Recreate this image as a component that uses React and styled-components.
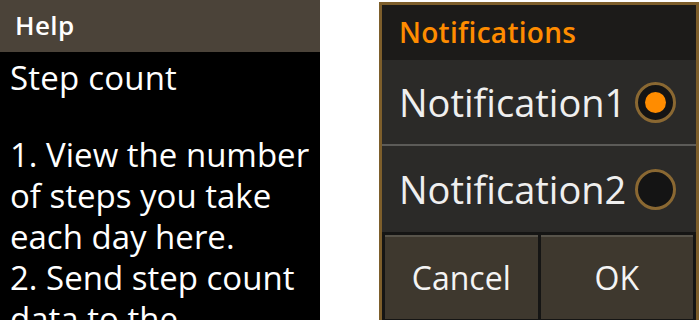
import React from "react";
import styled, { createGlobalStyle } from "styled-components";

const Global = createGlobalStyle`
  html, body { margin: 0; padding: 0; background: #ffffff; }
  body { width: 700px; height: 320px; overflow: hidden; font-family: "Open Sans", "Noto Sans", sans-serif; }
  * { box-sizing: border-box; }
`;

const Page = styled.div`
  display: flex;
  align-items: flex-start;
  gap: 59px;
  width: 700px;
  height: 320px;
  overflow: hidden;
`;

const HelpPanel = styled.section`
  width: 320px;
  height: 320px;
  background: #000000;
  color: #ffffff;
  overflow: hidden;
  display: flex;
  flex-direction: column;
`;

const HelpHeader = styled.header`
  height: 52px;
  flex: none;
  background: #4b4339;
  display: flex;
  align-items: center;
  padding: 0 15px 2px;
  font-size: 26px;
  font-weight: 600;
  letter-spacing: 0.4px;
`;

const HelpBody = styled.div`
  padding: 5px 10px 0;
`;

const HelpTitle = styled.h2`
  margin: 0 0 36px;
  font-size: 33px;
  font-weight: 400;
  line-height: 41px;
  letter-spacing: 0.2px;
  white-space: nowrap;
`;

const HelpText = styled.p`
  margin: 0;
`;

const HelpLine = styled.span`
  display: block;
  font-size: 33px;
  font-weight: 400;
  line-height: 41px;
  letter-spacing: 0px;
  white-space: nowrap;
`;

const Dialog = styled.section`
  margin-top: 2px;
  width: 320px;
  height: 318px;
  border: 3px solid #7d5e2b;
  border-bottom: none;
  background: #2b2a28;
  display: flex;
  flex-direction: column;
`;

const DialogTitle = styled.header`
  height: 55px;
  flex: none;
  background: #1c1b19;
  color: #ff8c00;
  font-size: 28px;
  font-weight: 600;
  letter-spacing: 0.3px;
  display: flex;
  align-items: center;
  padding: 0 17px 2px;
`;

const OptionRow = styled.label`
  height: ${(p) => p.$h}px;
  flex: none;
  display: flex;
  align-items: center;
  justify-content: space-between;
  padding: 0 20px 0 17px;
  color: #efefef;
  font-size: 38px;
  border-bottom: ${(p) => (p.$divider ? "2px solid #5c5b58" : "none")};
`;

const Radio = styled.span`
  width: 41px;
  height: 41px;
  flex: none;
  border-radius: 50%;
  border: 3px solid #8a6832;
  background: #141414;
  display: flex;
  align-items: center;
  justify-content: center;
  &::after {
    content: "";
    width: 21px;
    height: 21px;
    border-radius: 50%;
    background: #ff8c00;
    display: ${(p) => (p.$checked ? "block" : "none")};
  }
`;

const ButtonBar = styled.div`
  flex: 1;
  background: #151514;
  display: grid;
  grid-template-columns: 1fr 1fr;
  gap: 3px;
  padding: 3px 3px 1px;
`;

const Button = styled.button`
  border: none;
  border-top: 2px solid #57534a;
  background: #3e382e;
  color: #f4f4f4;
  font-family: "Open Sans", "Noto Sans", sans-serif;
  font-size: 32px;
  padding: 0 0 2px;
  display: flex;
  align-items: center;
  justify-content: center;
`;

const options = [
  { label: "Notification1", checked: true, h: 86, divider: true },
  { label: "Notification2", checked: false, h: 86, divider: false },
];

const helpLines = [
  "1. View the number",
  "of steps you take",
  "each day here.",
  "2. Send step count",
  "data to the",
  "application.",
];

export default function App() {
  return (
    <>
      <Global />
      <Page>
        <HelpPanel>
          <HelpHeader>Help</HelpHeader>
          <HelpBody>
            <HelpTitle>Step count</HelpTitle>
            <HelpText>
              {helpLines.map((l) => (
                <HelpLine key={l}>{l}</HelpLine>
              ))}
            </HelpText>
          </HelpBody>
        </HelpPanel>
        <Dialog>
          <DialogTitle>Notifications</DialogTitle>
          {options.map((o) => (
            <OptionRow key={o.label} $h={o.h} $divider={o.divider}>
              {o.label}
              <Radio $checked={o.checked} />
            </OptionRow>
          ))}
          <ButtonBar>
            <Button>Cancel</Button>
            <Button>OK</Button>
          </ButtonBar>
        </Dialog>
      </Page>
    </>
  );
}
